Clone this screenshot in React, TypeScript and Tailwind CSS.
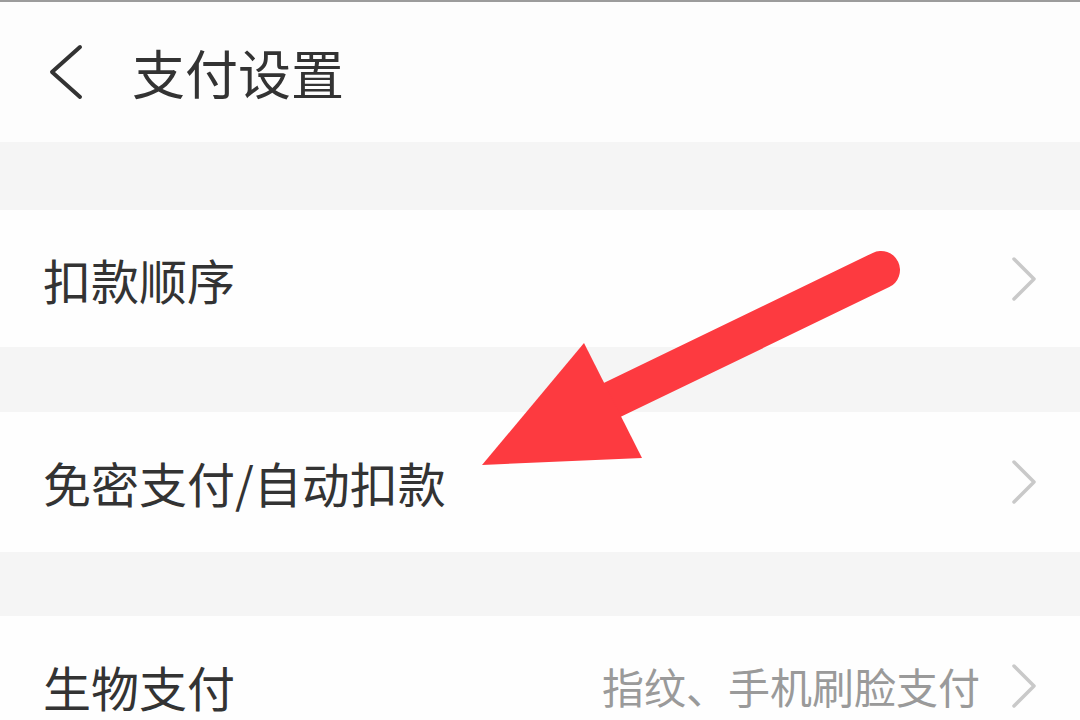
import React from "react";

const font = { fontFamily: '"Noto Sans CJK SC", "Noto Sans", sans-serif' };

const Chevron = () => (
  <svg width="28" height="46" viewBox="0 0 28 46" className="shrink-0">
    <path d="M4 3 L24 23 L4 43" fill="none" stroke="#c9c9c9" strokeWidth="3.5" strokeLinecap="round" strokeLinejoin="round" />
  </svg>
);

const Row = ({ label, hint, h }: { label: string; hint?: string; h: string }) => (
  <div className={`flex items-center justify-between bg-[#fefefe] pl-[43px] pr-[42px] ${h}`}>
    <span className="text-[48px] leading-none text-[#333333]">{label}</span>
    <div className="flex items-center gap-[30px]">
      {hint && <span className="text-[42px] leading-none text-[#9a9a9a]">{hint}</span>}
      <Chevron />
    </div>
  </div>
);

export default function App() {
  return (
    <div className="relative h-[720px] w-[1080px] overflow-hidden bg-[#f5f5f5]" style={font}>
      <div className="h-[2px] bg-[#9c9c9c]" />
      <div className="flex h-[140px] items-center bg-[#fdfdfd] pl-[46px]">
        <svg width="40" height="56" viewBox="0 0 40 56" className="shrink-0">
          <path d="M34 3 L6 28 L34 53" fill="none" stroke="#333333" strokeWidth="4" strokeLinecap="round" strokeLinejoin="round" />
        </svg>
        <span className="ml-[46px] text-[53px] leading-none text-[#333333]">支付设置</span>
      </div>
      <div className="h-[68px] bg-[#f5f5f5]" />
      <Row label="扣款顺序" h="h-[137px]" />
      <div className="h-[65px] bg-[#f5f5f5]" />
      <Row label="免密支付/自动扣款" h="h-[140px]" />
      <div className="h-[64px] bg-[#f5f5f5]" />
      <Row label="生物支付" hint="指纹、手机刷脸支付" h="h-[140px]" />

      {/* red arrow annotation */}
      <svg className="pointer-events-none absolute left-0 top-0" width="1080" height="720" viewBox="0 0 1080 720">
        <line x1="881" y1="270" x2="612" y2="400" stroke="#fd3a40" strokeWidth="38" strokeLinecap="round" />
        <polygon points="482,465 584,343 642,458" fill="#fd3a40" />
      </svg>
    </div>
  );
}
